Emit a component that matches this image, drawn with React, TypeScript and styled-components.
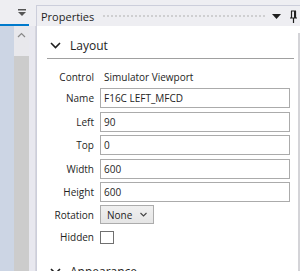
import React from "react";
import styled, { createGlobalStyle } from "styled-components";

const GlobalStyle = createGlobalStyle`
  html, body {
    margin: 0;
    padding: 0;
    background: #eeeef2;
    font-family: "Open Sans", "Noto Sans", sans-serif;
    color: #1e1e1e;
    overflow: hidden;
  }
`;

interface Field {
  label: string;
  value: string;
}

const fields: Field[] = [
  { label: "Name", value: "F16C LEFT_MFCD" },
  { label: "Left", value: "90" },
  { label: "Top", value: "0" },
  { label: "Width", value: "600" },
  { label: "Height", value: "600" },
];

function Chevron() {
  return (
    <svg width="11" height="7" viewBox="0 0 11 7">
      <path d="M1 1l4.5 4.5L10 1" fill="none" stroke="#1e1e1e" strokeWidth="1.6" />
    </svg>
  );
}

function Section({ title, children }: { title: string; children?: React.ReactNode }) {
  return (
    <>
      <SectionHeader>
        <Chevron />
        <span>{title}</span>
      </SectionHeader>
      {children}
    </>
  );
}

export default function App() {
  return (
    <Page>
      <GlobalStyle />
      <LeftPane>
        <LeftToolbar>
          <svg width="8" height="7" viewBox="0 0 8 7">
            <rect x="0" y="0" width="8" height="1.5" fill="#555" />
            <path d="M0 3h8L4 7z" fill="#555" />
          </svg>
        </LeftToolbar>
        <LeftBody>
          <TreeStrip />
          <LeftScroll>
            <ScrollArrow>
              <svg width="9" height="6" viewBox="0 0 9 6">
                <path d="M1 5l3.5-3.5L8 5" fill="none" stroke="#888" strokeWidth="1.2" />
              </svg>
            </ScrollArrow>
            <ScrollThumb />
          </LeftScroll>
          <Gutter />
        </LeftBody>
      </LeftPane>

      <PropertiesPane>
        <TitleBar>
          <Title>Properties</Title>
          <Grip />
          <TitleIcons>
            <svg width="9" height="5" viewBox="0 0 9 5">
              <path d="M0 0h9L4.5 5z" fill="#1e1e1e" />
            </svg>
            <svg width="9" height="13" viewBox="0 0 9 13">
              <path d="M2 1h5M2.5 1v7M6.5 1v7M1 8h7M4.5 8v5" fill="none" stroke="#1e1e1e" strokeWidth="1.2" />
              <rect x="5" y="1" width="1.5" height="7" fill="#1e1e1e" />
            </svg>
          </TitleIcons>
        </TitleBar>
        <Content>
          <Scroller>
            <Section title="Layout">
              <Grid>
                <Label>Control</Label>
                <StaticValue>Simulator Viewport</StaticValue>
                {fields.map((f) => (
                  <React.Fragment key={f.label}>
                    <Label>{f.label}</Label>
                    <TextBox>{f.value}</TextBox>
                  </React.Fragment>
                ))}
                <Label>Rotation</Label>
                <Combo>
                  <span>None</span>
                  <svg width="7" height="5" viewBox="0 0 7 5">
                    <path d="M0.5 1l3 3 3-3" fill="none" stroke="#444" strokeWidth="1.1" />
                  </svg>
                </Combo>
                <Label $check>Hidden</Label>
                <CheckBox />
              </Grid>
            </Section>
            <Section title="Appearance" />
          </Scroller>
          <VScroll />
        </Content>
      </PropertiesPane>
    </Page>
  );
}

const Page = styled.div`
  display: flex;
  width: 300px;
  height: 271px;
  overflow: hidden;
`;

const LeftPane = styled.div`
  width: 36px;
  display: flex;
  flex-direction: column;
  flex-shrink: 0;
`;

const LeftToolbar = styled.div`
  height: 24px;
  display: flex;
  justify-content: flex-end;
  align-items: center;
  padding-right: 3px;
  border-bottom: 2px solid #007acc;
  margin-right: 7px;
`;

const LeftBody = styled.div`
  flex: 1;
  display: flex;
`;

const TreeStrip = styled.div`
  width: 14px;
  background: #ccd5e4;
`;

const LeftScroll = styled.div`
  width: 15px;
  display: flex;
  flex-direction: column;
  background: #e8e8ec;
`;

const ScrollArrow = styled.div`
  height: 17px;
  display: flex;
  justify-content: center;
  align-items: center;
`;

const ScrollThumb = styled.div`
  flex: 1;
  margin-top: 13px;
  background: #cccccc;
`;

const Gutter = styled.div`
  width: 6px;
  background: #e8e8ef;
  border-right: 1px solid #d6d6de;
`;

const PropertiesPane = styled.div`
  flex: 1;
  display: flex;
  flex-direction: column;
  margin-top: 5px;
  border-top: 1px solid #cccedb;
  border-left: 1px solid #cccedb;
  min-width: 0;
`;

const TitleBar = styled.div`
  height: 20px;
  display: flex;
  align-items: center;
  padding-left: 4px;
  background: #eeeef2;
`;

const Title = styled.span`
  font-size: 11px;
  color: #1e1e1e;
`;

const Grip = styled.div`
  flex: 1;
  height: 5px;
  margin: 0 5px 0 8px;
  background-image: radial-gradient(circle, #999 0.6px, transparent 0.8px);
  background-size: 4px 4px;
  background-position: 0 0;
  opacity: 0.8;
`;

const TitleIcons = styled.div`
  display: flex;
  align-items: center;
  gap: 8px;
  padding-right: 2px;
`;

const Content = styled.div`
  flex: 1;
  display: flex;
  background: #ffffff;
  min-height: 0;
`;

const Scroller = styled.div`
  flex: 1;
  padding: 0 4px 0 10px;
`;

const SectionHeader = styled.div`
  box-sizing: border-box;
  display: flex;
  align-items: center;
  gap: 9px;
  height: 33px;
  padding: 7px 0 0 3px;
  border-bottom: 1px solid #a0a0a0;
  font-size: 12px;
  color: #1e1e1e;
`;

const Grid = styled.div`
  display: grid;
  grid-template-columns: 47px 190px;
  grid-template-rows: 17px repeat(5, 20px) 19px 14px;
  column-gap: 6px;
  row-gap: 3.4px;
  padding: 9px 0 10px 0;
  align-items: center;
  font-size: 10px;
`;

const Label = styled.span<{ $check?: boolean }>`
  text-align: right;
  white-space: nowrap;
  margin-top: ${(p) => (p.$check ? "5px" : "0")};
`;

const StaticValue = styled.span`
  padding-left: 4px;
  white-space: nowrap;
`;

const TextBox = styled.div`
  box-sizing: border-box;
  height: 20px;
  border: 1px solid #ababab;
  display: flex;
  align-items: center;
  padding-left: 3px;
  background: #fff;
`;

const Combo = styled.div`
  box-sizing: border-box;
  width: 54px;
  height: 19px;
  border: 1px solid #acacac;
  background: linear-gradient(#f0f0f0, #e5e5e5);
  display: flex;
  align-items: center;
  justify-content: space-between;
  padding: 0 6px 0 6px;
`;

const CheckBox = styled.div`
  box-sizing: border-box;
  width: 14px;
  height: 13px;
  margin-top: 5px;
  border: 1px solid #707070;
  background: #fff;
`;

const VScroll = styled.div`
  width: 2px;
  margin-top: 7px;
  background: #d4d4d8;
`;
